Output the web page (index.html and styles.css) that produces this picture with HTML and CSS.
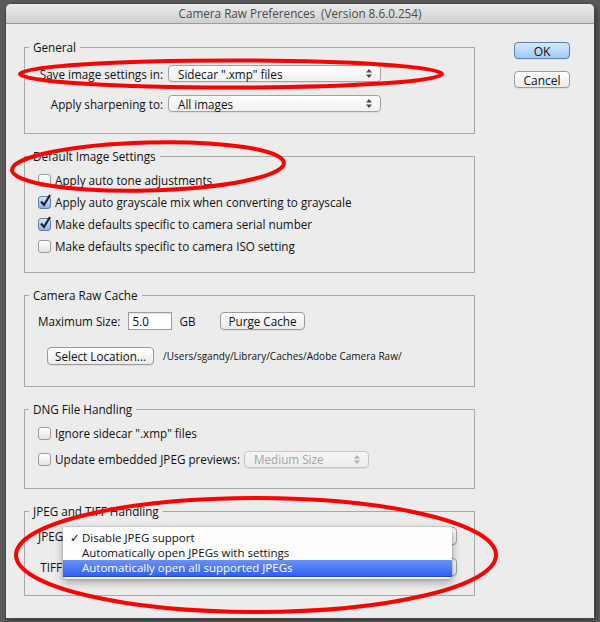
FILE: index.html
```html
<!DOCTYPE html>
<html lang="en">
<head>
  <meta charset="UTF-8">
  <title>Camera Raw Preferences</title>
  <link rel="stylesheet" href="styles.css">
</head>
<body>
  <div class="window">
    <div class="titlebar">Camera Raw Preferences&nbsp; (Version 8.6.0.254)</div>

    <div class="dialog">
      <div class="groups">

        <!-- General -->
        <fieldset class="group">
          <legend>General</legend>
          <div class="form-grid general">
            <span class="label">Save image settings in:</span>
            <div class="select"><span>Sidecar ".xmp" files</span><svg class="arrows" width="6" height="9" viewBox="0 0 6 9"><path d="M0 3.6L3 0 6 3.6z M0 5.4h6L3 9z"/></svg></div>
            <span class="label">Apply sharpening to:</span>
            <div class="select"><span>All images</span><svg class="arrows" width="6" height="9" viewBox="0 0 6 9"><path d="M0 3.6L3 0 6 3.6z M0 5.4h6L3 9z"/></svg></div>
          </div>
        </fieldset>

        <!-- Default Image Settings -->
        <fieldset class="group">
          <legend>Default Image Settings</legend>
          <div class="check-list defaults">
            <label class="check"><span class="box"></span>Apply auto tone adjustments</label>
            <label class="check"><span class="box on"><svg width="12" height="13" viewBox="0 0 12 13"><path d="M2 7.5L5 11 11 1" /></svg></span>Apply auto grayscale mix when converting to grayscale</label>
            <label class="check"><span class="box on"><svg width="12" height="13" viewBox="0 0 12 13"><path d="M2 7.5L5 11 11 1" /></svg></span>Make defaults specific to camera serial number</label>
            <label class="check"><span class="box"></span>Make defaults specific to camera ISO setting</label>
          </div>
        </fieldset>

        <!-- Camera Raw Cache -->
        <fieldset class="group">
          <legend>Camera Raw Cache</legend>
          <div class="cache">
            <div class="cache-row">
              <span>Maximum Size:</span>
              <span class="field">5.0</span>
              <span class="unit">GB</span>
              <button class="btn purge">Purge Cache</button>
            </div>
            <div class="cache-row">
              <button class="btn locate">Select Location...</button>
              <span class="path">/Users/sgandy/Library/Caches/Adobe Camera Raw/</span>
            </div>
          </div>
        </fieldset>

        <!-- DNG File Handling -->
        <fieldset class="group">
          <legend>DNG File Handling</legend>
          <div class="check-list dng">
            <label class="check"><span class="box"></span>Ignore sidecar ".xmp" files</label>
            <label class="check"><span class="box"></span>Update embedded JPEG previews:
              <span class="select is-disabled preview-size"><span>Medium Size</span><svg class="arrows" width="6" height="9" viewBox="0 0 6 9"><path d="M0 3.6L3 0 6 3.6z M0 5.4h6L3 9z"/></svg></span>
            </label>
          </div>
        </fieldset>

        <!-- JPEG and TIFF Handling -->
        <fieldset class="group">
          <legend>JPEG and TIFF Handling</legend>
          <div class="form-grid jpeg">
            <span class="label">JPEG</span>
            <div class="select"><span></span><svg class="arrows" width="6" height="9" viewBox="0 0 6 9"><path d="M0 3.6L3 0 6 3.6z M0 5.4h6L3 9z"/></svg></div>
            <span class="label">TIFF</span>
            <div class="select"><span></span><svg class="arrows" width="6" height="9" viewBox="0 0 6 9"><path d="M0 3.6L3 0 6 3.6z M0 5.4h6L3 9z"/></svg></div>

            <!-- open popup menu of the JPEG select -->
            <ul class="menu">
              <li class="menu-item checked">Disable JPEG support</li>
              <li class="menu-item">Automatically open JPEGs with settings</li>
              <li class="menu-item active">Automatically open all supported JPEGs</li>
            </ul>
          </div>
        </fieldset>

      </div>

      <div class="actions">
        <button class="btn btn-default">OK</button>
        <button class="btn">Cancel</button>
      </div>
    </div>
  </div>

  <!-- red annotation marks -->
  <svg class="marks" width="600" height="622" viewBox="0 0 600 622">
    <ellipse cx="231" cy="74" rx="211" ry="13.5"/>
    <ellipse cx="148" cy="166.5" rx="136" ry="24" transform="rotate(-1.5 148 166.5)"/>
    <ellipse cx="256" cy="555" rx="240" ry="57"/>
  </svg>
</body>
</html>
```

FILE: styles.css
```css
html, body {
  margin: 0;
  padding: 0;
}

body {
  position: relative;
  width: 600px;
  height: 622px;
  overflow: hidden;
  background-color: #5a5a5a;
  font-family: 'Lucida Grande', 'Open Sans', 'DejaVu Sans', sans-serif;
  font-size: 11.7px;
  color: #111;
}

.window {
  margin: 4px 0 0 6px;
  width: 588px;
  height: 614px;
  background-color: #ececec;
  border-radius: 5px 5px 0 0;
  box-shadow: 0 0 0 1px #484848, 2px 2px 5px rgba(0, 0, 0, 0.5);
  overflow: hidden;
}

.titlebar {
  height: 19px;
  line-height: 19px;
  text-align: center;
  color: #4a4a4a;
  background: linear-gradient(#ebebeb, #cfcfcf);
  border-bottom: 1px solid #9a9a9a;
}

.dialog {
  display: flex;
  padding: 16px 0 0 18px;
}

.groups {
  display: flex;
  flex-direction: column;
  gap: 15px;
  width: 451px;
}

.group {
  margin: 0;
  padding: 0 13px;
  min-width: 0;
  border: 1px solid #a8a8a8;
}

.group legend {
  margin-left: -9px;
  padding: 0 4px;
  line-height: 14px;
}

/* selects */
.select {
  display: flex;
  align-items: center;
  justify-content: space-between;
  box-sizing: border-box;
  height: 17px;
  padding: 0 8px 0 9px;
  border: 1px solid #a2a2a2;
  border-radius: 4px;
  background: linear-gradient(#ffffff, #f0f0f0);
  box-shadow: 0 1px 0 rgba(0, 0, 0, 0.06);
}

.select .arrows {
  fill: #4a4a4a;
}

.select.is-disabled {
  color: #a4a4a4;
  border-color: #c6c6c6;
  background: linear-gradient(#f6f6f6, #ececec);
}

.select.is-disabled .arrows {
  fill: #b0b0b0;
}

.form-grid {
  display: grid;
  align-items: center;
}

.form-grid .label {
  text-align: right;
}

.general {
  grid-template-columns: 125px 213px;
  column-gap: 5px;
  row-gap: 13px;
  padding: 11px 0 21px;
}

/* checkboxes */
.check-list {
  display: flex;
  flex-direction: column;
}

.defaults {
  padding: 6px 0 15px;
}

.dng {
  padding: 6px 0 18px;
  gap: 4px;
}

.check {
  display: flex;
  align-items: center;
  gap: 4px;
  height: 22px;
}

.box {
  position: relative;
  flex: none;
  box-sizing: border-box;
  width: 13px;
  height: 13px;
  border: 1px solid #9b9b9b;
  border-radius: 3px;
  background: linear-gradient(#ffffff, #e4e4e4);
}

.box.on {
  border-color: #5d7ea6;
  background: linear-gradient(#d8e7f8, #8fb4e4);
}

.box svg {
  position: absolute;
  left: 0;
  top: -3px;
  fill: none;
  stroke: #1d2430;
  stroke-width: 2.2;
}

.preview-size {
  width: 125px;
}

/* cache */
.cache {
  display: flex;
  flex-direction: column;
  gap: 17px;
  padding: 10px 0 21px;
}

.cache-row {
  display: flex;
  align-items: center;
}

.field {
  box-sizing: border-box;
  width: 44px;
  height: 18px;
  margin-left: 8px;
  padding: 0 3px;
  line-height: 16px;
  border: 1px solid #9c9c9c;
  background-color: #fff;
  box-shadow: inset 0 1px 1px rgba(0, 0, 0, 0.12);
}

.unit {
  margin-left: 7px;
}

.btn {
  box-sizing: border-box;
  height: 18px;
  padding: 0 7px;
  font: inherit;
  color: #111;
  border: 1px solid #9a9a9a;
  border-radius: 4px;
  background: linear-gradient(#ffffff, #ebebeb);
  box-shadow: 0 1px 0 rgba(0, 0, 0, 0.06);
}

.purge {
  margin-left: 25px;
}

.locate {
  margin-left: 9px;
}

.path {
  margin-left: 9px;
  font-size: 10px;
}

/* jpeg / tiff */
.jpeg {
  position: relative;
  grid-template-columns: 24px 384px;
  column-gap: 11px;
  row-gap: 13px;
  padding: 9px 0 19px;
}

.jpeg .select {
  height: 18px;
}

.menu {
  position: absolute;
  left: 25px;
  top: 9px;
  width: 389px;
  margin: 0;
  padding: 3px 0 2px;
  list-style: none;
  background-color: #fdfdfd;
  border-radius: 0 0 4px 4px;
  box-shadow: 0 3px 9px rgba(0, 0, 0, 0.35), 0 0 0 1px rgba(0, 0, 0, 0.08);
}

.menu-item {
  position: relative;
  height: 15px;
  line-height: 15px;
  padding-left: 19px;
  font-size: 11.5px;
}

.menu-item.checked::before {
  content: '\2713';
  position: absolute;
  left: 7px;
}

.menu-item.active {
  height: 16px;
  line-height: 16px;
  color: #fff;
  background: linear-gradient(#6b91f8, #2f62f0);
  border-bottom: 1px solid #1f4fd8;
}

/* right column */
.actions {
  display: flex;
  flex-direction: column;
  gap: 12px;
  margin-left: 39px;
  padding-top: 2px;
}

.actions .btn {
  width: 56px;
  height: 17px;
  font-size: 12px;
}

.btn-default {
  border-color: #5b7faf;
  background: linear-gradient(#d6e8fb, #9fcaf3);
}

.marks {
  position: absolute;
  top: 0;
  left: 0;
  pointer-events: none;
}

.marks ellipse {
  fill: none;
  stroke: #f00;
  stroke-width: 4;
}
```
